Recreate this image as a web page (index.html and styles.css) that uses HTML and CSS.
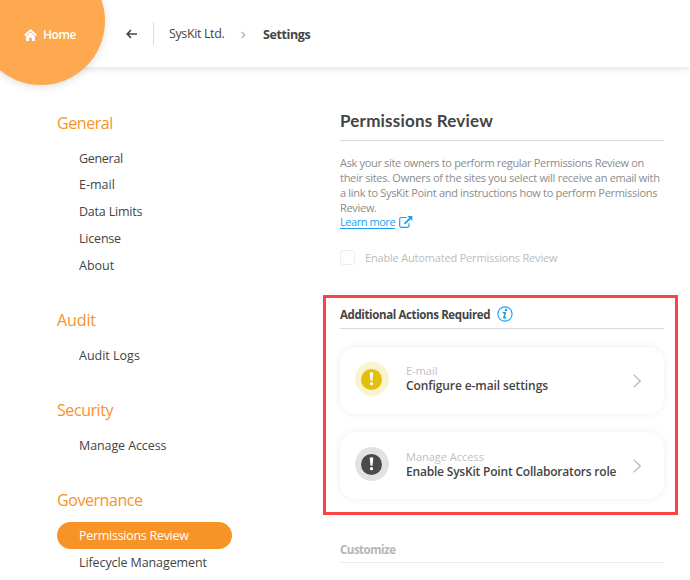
FILE: index.html
```html
<!DOCTYPE html>
<html lang="en">
<head>
<meta charset="utf-8">
<title>Settings</title>
<link rel="stylesheet" href="styles.css">
</head>
<body>
<header class="topbar">
  <a class="home">
    <svg width="13" height="12" viewBox="0 0 13 12"><path d="M.7 6.5 6.5 1.2l5.8 5.3" fill="none" stroke="#fff" stroke-width="1.7"/><path d="M2.1 7.2 6.5 3.3l4.4 3.9V12H7.9V8.8H5.1V12h-3z" fill="#fff"/></svg>
    <span class="home-label">Home</span>
  </a>
  <svg class="back" width="12" height="10" viewBox="0 0 12 10" fill="none" stroke="#444" stroke-width="1.6"><path d="M11 5H1.2M5 1 1.2 5 5 9"/></svg>
  <span class="divider"></span>
  <span class="crumb">SysKit Ltd.</span>
  <svg class="sep" width="5" height="8" viewBox="0 0 5 8" fill="none" stroke="#aaa" stroke-width="1.2"><path d="m.7.8 3 3.2-3 3.2"/></svg>
  <span class="current">Settings</span>
</header>
<div class="body">
  <nav class="nav">
    <h2>General</h2>
    <a><span class="n1">General</span></a>
    <a><span class="n2">E-mail</span></a>
    <a><span class="n3">Data Limits</span></a>
    <a><span class="n4">License</span></a>
    <a><span class="n5">About</span></a>
    <h2 class="audit">Audit</h2>
    <a><span class="n6">Audit Logs</span></a>
    <h2>Security</h2>
    <a><span class="n7">Manage Access</span></a>
    <h2>Governance</h2>
    <a class="active"><span class="n8">Permissions Review</span></a>
    <a><span class="n9">Lifecycle Management</span></a>
  </nav>
  <main class="main">
    <h1>Permissions Review</h1>
    <p class="desc"><span class="d1">Ask your site owners to perform regular Permissions Review on</span><br><span class="d2">their sites. Owners of the sites you select will receive an email with</span><br><span class="d3">a link to SysKit Point and instructions how to perform Permissions</span><br><span class="d4">Review.</span></p>
    <div class="more"><a class="learn">Learn more</a>
      <svg width="14" height="12" viewBox="0 0 14 12" fill="none" stroke="#1b9ff1"><path d="M7.5 1.5H2.2Q.7 1.5.7 3v6.8q0 1.5 1.5 1.5h6.3q1.5 0 1.5-1.5V7.2" stroke-width="1.2"/><path d="M5.5 7.8 11 2.5" stroke-width="1.8"/><path d="M8.3 0H13.3v5z" fill="#1b9ff1" stroke="none"/></svg>
    </div>
    <label class="enable"><span class="box"></span><span class="enable-label">Enable Automated Permissions Review</span></label>
    <section class="required">
      <h3><span class="required-label">Additional Actions Required</span>
        <svg width="16" height="16" viewBox="0 0 16 16"><circle cx="8" cy="8" r="7.1" fill="none" stroke="#1b9ff1" stroke-width="1.1"/><circle cx="9.1" cy="4" r="1.3" fill="#1b9ff1"/><path d="M5.7 6.8h2.5L6.9 11.8q.7.5 2.2-.6" fill="none" stroke="#1b9ff1" stroke-width="1.5"/></svg>
      </h3>
      <div class="card">
        <span class="alert yellow"><svg width="21" height="21" viewBox="0 0 21 21"><circle cx="10.5" cy="10.5" r="10.5" fill="#e2bf0b"/><path d="M8.7 3.8q1.8-1.3 3.6 0l-.8 8h-2z" fill="#fff"/><circle cx="10.5" cy="14.7" r="1.6" fill="#fff"/></svg></span>
        <div class="card-text"><span class="small s1">E-mail</span><span class="strong t1">Configure e-mail settings</span></div>
        <svg class="chev" width="8" height="14" viewBox="0 0 8 14" fill="none" stroke="#bbb" stroke-width="1.3"><path d="m.6.6 6.6 6.4-6.6 6.4"/></svg>
      </div>
      <div class="card">
        <span class="alert dark"><svg width="21" height="21" viewBox="0 0 21 21"><circle cx="10.5" cy="10.5" r="10.5" fill="#4a4a4c"/><path d="M8.7 3.8q1.8-1.3 3.6 0l-.8 8h-2z" fill="#fff"/><circle cx="10.5" cy="14.7" r="1.6" fill="#fff"/></svg></span>
        <div class="card-text"><span class="small s2">Manage Access</span><span class="strong t2">Enable SysKit Point Collaborators role</span></div>
        <svg class="chev" width="8" height="14" viewBox="0 0 8 14" fill="none" stroke="#bbb" stroke-width="1.3"><path d="m.6.6 6.6 6.4-6.6 6.4"/></svg>
      </div>
    </section>
    <h3 class="customize"><span class="customize-label">Customize</span></h3>
  </main>
</div>
</body>
</html>
```
FILE: styles.css
```css
* { box-sizing: border-box; }
body {
  margin: 0;
  height: 580px;
  overflow: hidden;
  background: #fff;
  color: #444;
  font-family: "Open Sans", "Noto Sans", sans-serif;
  font-size: 12.5px;
}
svg { display: block; flex: none; }
span, h1, h2, a { white-space: nowrap; }
.topbar {
  display: flex;
  align-items: center;
  height: 67px;
  padding-left: 126px;
  box-shadow: 0 2px 7px rgba(0, 0, 0, .11);
}
.home {
  position: absolute;
  left: -23px;
  top: -43px;
  width: 128px;
  height: 128px;
  border-radius: 50%;
  background: #fea94f;
  box-shadow: 0 2px 8px rgba(0, 0, 0, .12);
  display: flex;
  align-items: center;
  padding: 27px 0 0 47px;
  gap: 6px;
  color: #fff;
  font-weight: 600;
}
.home-label { font-size: 12px; letter-spacing: -.4px; }
.divider { width: 1px; height: 23px; background: #ddd; margin: 0 15px 0 15px; }
.crumb { width: 56px; letter-spacing: -.38px; }
.sep { margin: 2px 0 0 16px; }
.current { margin: 2px 0 0 17px; font-weight: 700; letter-spacing: -.38px; }
.body { display: grid; grid-template-columns: 283px 324px; padding: 44px 0 0 57px; }
.nav h2 {
  margin: 29.6px 0 9.6px;
  height: 24px;
  line-height: 24px;
  font-size: 16px;
  font-weight: 400;
  letter-spacing: -.43px;
  color: #f89328;
}
.nav h2:first-child { margin-top: 0; }
.nav .audit { letter-spacing: -.1px; }
.nav a {
  display: block;
  width: 175px;
  height: 26.8px;
  line-height: 28.6px;
  padding-left: 22px;
  border-radius: 14px;
}
.n1 { letter-spacing: -.3px; }
.n3, .n4 { letter-spacing: -.2px; }
.n7, .n9 { letter-spacing: -.1px; }
.n8 { letter-spacing: -.28px; }
.nav .active { background: #f89328; color: #fff; }
.main { min-width: 0; }
h1 {
  margin: 0;
  height: 30px;
  line-height: 20px;
  font-family: Lato, "Open Sans", sans-serif;
  font-size: 17px;
  font-weight: 700;
  letter-spacing: .2px;
  color: #444;
  border-bottom: 1px solid #d9d9d9;
}
.desc { margin: 14px 0 0; font-size: 11px; line-height: 15px; color: #8c8c8c; height: 59px; }
.d1 { letter-spacing: -.33px; }
.d2 { letter-spacing: -.285px; }
.d3, .d4 { letter-spacing: -.305px; }
.more { display: flex; align-items: center; gap: 4px; height: 15px; font-size: 11px; }
.learn { color: #1b9ff1; text-decoration: underline; text-underline-offset: 2px; letter-spacing: -.45px; }
.enable { display: flex; align-items: center; height: 15px; margin-top: 21px; gap: 10px; font-size: 11px; color: #bcbcbc; letter-spacing: -.18px; }
.box { width: 15px; height: 15px; border: 1px solid #eee; border-radius: 3px; }
.required {
  width: 355px;
  height: 220px;
  margin: 30px 0 0 -17px;
  padding: 5px 11px 0 14px;
  border: 3px solid #fb4244;
}
h3 { margin: 0; font-size: 11.5px; font-weight: 700; color: #444; }
.required h3 {
  display: flex;
  align-items: center;
  gap: 7px;
  height: 26px;
  padding-bottom: 3px;
  border-bottom: 1px solid #d9d9d9;
}
.required-label { letter-spacing: -.38px; padding-top: 1px; }
.card {
  display: flex;
  align-items: center;
  height: 67px;
  margin-top: 18px;
  padding: 0 23px 0 15px;
  border-radius: 16px;
  box-shadow: 0 0 8px rgba(0, 0, 0, .07);
}
.alert { display: grid; place-items: center; width: 34px; height: 34px; border-radius: 50%; margin-top: -3px; }
.alert svg { margin-right: 1px; }
.yellow { background: #faf3d2; }
.dark { background: #e2e2e2; }
.card-text { flex: 1; display: flex; flex-direction: column; margin: -6px 0 0 17px; }
.small { font-size: 11px; line-height: 15px; color: #bfbfbf; }
.strong { font-size: 12px; line-height: 15px; font-weight: 600; }
.t1 { letter-spacing: -.1px; }
.t2 { letter-spacing: -.2px; }
.card + .card .card-text { margin-top: -4px; }
.customize { margin-top: 26px; height: 22px; line-height: 17px; color: #b5b5b5; border-bottom: 1px solid #eee; letter-spacing: -.5px; }
```
